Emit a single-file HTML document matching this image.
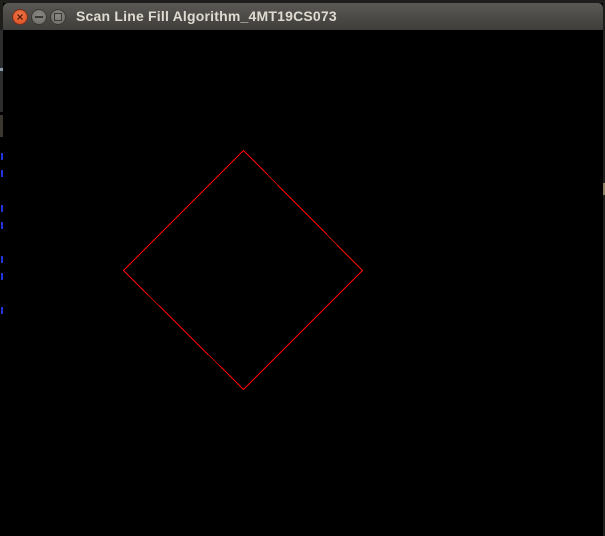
<!DOCTYPE html>
<html><head><meta charset="utf-8"><style>
html,body{margin:0;padding:0;width:605px;height:536px;overflow:hidden;background:#1e1f1c;}
.win{position:absolute;left:3px;top:3px;width:600px;height:533px;background:#000;}
.tb{position:absolute;left:0;top:0;width:600px;height:27px;background:linear-gradient(#5a5954,#3f3e3a);border-radius:5px 5px 0 0;}
.t{position:absolute;left:73px;top:5px;font:bold 14px "Liberation Sans",sans-serif;color:#dfdbd2;letter-spacing:0.2px;}
.b{position:absolute;top:6px;width:14px;height:14px;border-radius:50%;}
.strip{position:absolute;left:0;top:30px;width:3px;height:506px;background:#000;}
</style></head><body>
<div class="strip"></div>
<div style="position:absolute;left:0;top:30px;width:3px;height:82px;background:#2c2e2e"></div>
<div style="position:absolute;left:0;top:68px;width:3px;height:3px;background:#8a9aa8"></div>
<div style="position:absolute;left:0;top:115px;width:3px;height:22px;background:#3a3630"></div>
<div class="win">
<div class="tb">
<div class="b" style="left:9px;background:radial-gradient(circle at 50% 40%,#f07a4a,#d9461c);border:1px solid #6a3020"></div>
<svg style="position:absolute;left:13px;top:10px" width="8" height="8"><path d="M1.5 1.5L6.5 6.5M6.5 1.5L1.5 6.5" stroke="#5a1a08" stroke-width="1.3"/></svg>
<div class="b" style="left:28px;background:radial-gradient(circle at 50% 40%,#8a8983,#6a6964);border:1px solid #3a3936"></div>
<div style="position:absolute;left:32px;top:13px;width:8px;height:2px;background:#3a3936"></div>
<div class="b" style="left:47px;background:radial-gradient(circle at 50% 40%,#8a8983,#6a6964);border:1px solid #3a3936"></div>
<div style="position:absolute;left:51px;top:10px;width:6px;height:6px;border:1px solid #3a3936"></div>
<div class="t">Scan Line Fill Algorithm_4MT19CS073</div>
</div>
</div>
<svg width="605" height="536" style="position:absolute;left:0;top:0" shape-rendering="crispEdges">
<polygon points="243.5,150.5 362.5,270.5 243.5,389.5 123.5,270.5" fill="none" stroke="#ff0000" stroke-width="1"/>
<g fill="#2233dd">
<rect x="1" y="153" width="2" height="7"/><rect x="1" y="170" width="2" height="7"/>
<rect x="1" y="205" width="2" height="7"/><rect x="1" y="222" width="2" height="7"/>
<rect x="1" y="256" width="2" height="7"/><rect x="1" y="273" width="2" height="7"/>
<rect x="1" y="307" width="2" height="7"/>
</g>
<rect x="603" y="183" width="2" height="12" fill="#8a8060"/>
</svg>
</body></html>
